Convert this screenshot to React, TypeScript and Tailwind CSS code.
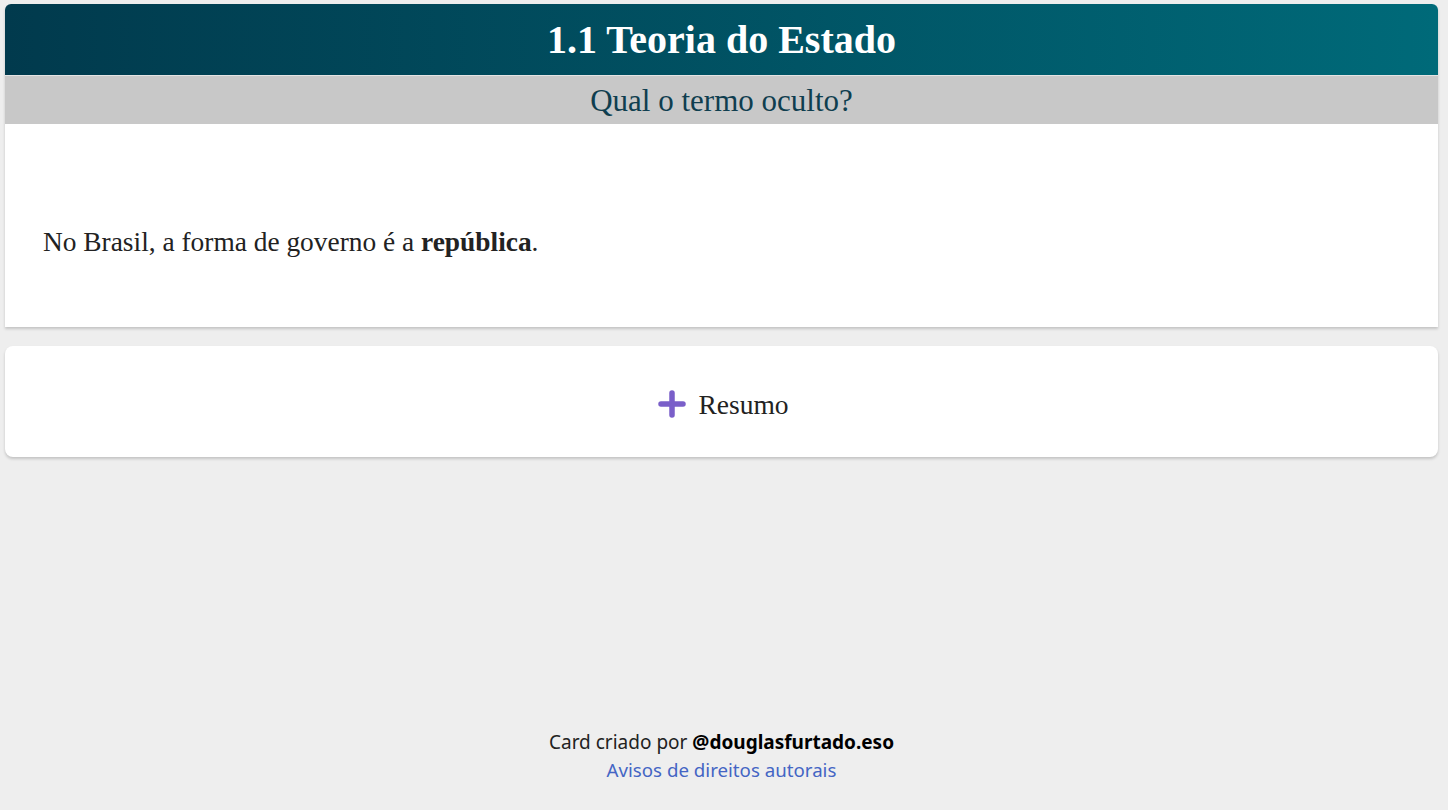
import React from "react";

export default function App() {
  return (
    <div className="min-h-[810px] bg-[#eeeeee] flex flex-col" style={{ fontFamily: '"Liberation Serif", serif' }}>
      <div className="ml-[5px] mr-[10px] mt-[4px]">
        <div className="bg-white shadow-[0_2px_3px_rgba(0,0,0,0.18)] rounded-t-[6px]">
          <div className="h-[71px] rounded-t-[6px] bg-gradient-to-r from-[#013a4d] to-[#006a79] flex items-center justify-center">
            <h1 className="text-white font-bold text-[40px] leading-none">1.1 Teoria do Estado</h1>
          </div>
          <div className="h-[49px] bg-[#c8c8c8] flex items-center justify-center border-t border-[#e4e4e4]">
            <div className="text-[#0f3e4f] text-[31px] leading-none">Qual o termo oculto?</div>
          </div>
          <div className="h-[203px] flex items-center px-[38px] pt-[34px]">
            <p className="text-[#222222] text-[27.4px] leading-none">
              No Brasil, a forma de governo é a <b>república</b>.
            </p>
          </div>
        </div>
        <div className="mt-[19px] h-[111px] bg-white rounded-[8px] shadow-[0_2px_3px_rgba(0,0,0,0.18)] flex items-center justify-center gap-[12px] pt-[4px] pl-[4px]">
          <svg width="28" height="28" viewBox="0 0 28 28">
            <path d="M14 3v22M3 14h22" stroke="#7a5fc9" strokeWidth="5.5" strokeLinecap="round" />
          </svg>
          <span className="text-[#222222] text-[27.5px] leading-none pt-[2px]">Resumo</span>
        </div>
        <div className="mt-[272px] flex flex-col items-center text-[19px] leading-[27px]" style={{ fontFamily: '"Noto Sans", sans-serif' }}>
          <div className="text-[#222222]">
            Card criado por <b className="text-black">@douglasfurtado.eso</b>
          </div>
          <a className="text-[#4465c4] text-[18.7px]">Avisos de direitos autorais</a>
        </div>
      </div>
    </div>
  );
}
